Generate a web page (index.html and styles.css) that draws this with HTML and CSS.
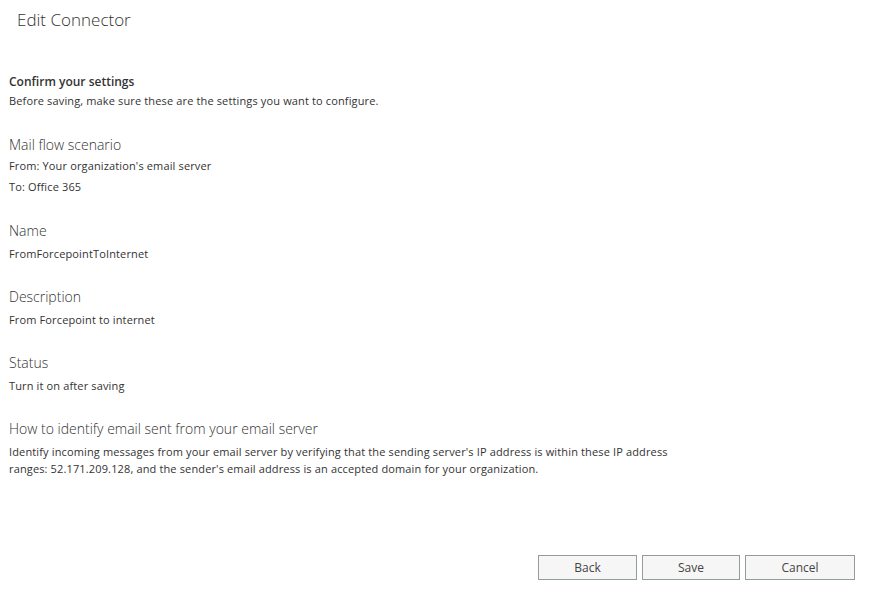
FILE: index.html
```html
<!DOCTYPE html>
<html lang="en">
<head>
  <meta charset="UTF-8" />
  <title>Edit Connector</title>
  <link rel="stylesheet" href="styles.css">
</head>
<body>
  <div class="page">
    <h1 class="title">Edit Connector</h1>

    <div class="content">
      <div class="intro">
        <div class="intro-head">Confirm your settings</div>
        <div class="intro-text">Before saving, make sure these are the settings you want to configure.</div>
      </div>

      <div class="section section-scenario">
        <h2 class="label">Mail flow scenario</h2>
        <div class="value">From: Your organization's email server</div>
        <div class="value">To: Office 365</div>
      </div>

      <div class="section">
        <h2 class="label">Name</h2>
        <div class="value">FromForcepointToInternet</div>
      </div>

      <div class="section">
        <h2 class="label">Description</h2>
        <div class="value">From Forcepoint to internet</div>
      </div>

      <div class="section">
        <h2 class="label">Status</h2>
        <div class="value">Turn it on after saving</div>
      </div>

      <div class="section">
        <h2 class="label">How to identify email sent from your email server</h2>
        <p class="para">Identify incoming messages from your email server by verifying that the sending server's IP address is within these IP address ranges: 52.171.209.128, and the sender's email address is an accepted domain for your organization.</p>
      </div>
    </div>

    <div class="footer">
      <button class="btn btn-back">Back</button>
      <button class="btn btn-save">Save</button>
      <button class="btn btn-cancel">Cancel</button>
    </div>
  </div>
</body>
</html>
```

FILE: styles.css
```css
body { margin: 0; font-family: 'Open Sans', 'Noto Sans', sans-serif; background: #fff; color: #333; }
.page { display: flex; flex-direction: column; min-height: 100vh; box-sizing: border-box; padding-bottom: 26px; }
.title { margin: 0; padding: 8px 0 0 17px; font-size: 17px; font-weight: 300; line-height: 24px; color: #333; }
.content { padding-left: 9px; }
.intro { margin-top: 40px; }
.intro-head { font-size: 12px; font-weight: 600; line-height: 20px; color: #333; }
.intro-text { font-size: 11px; line-height: 18px; letter-spacing: 0.14px; color: #333; }
.section { margin-top: 22px; }
.label { margin: 0; font-size: 14px; font-weight: 300; line-height: 22px; color: #333; }
.value { font-size: 11px; line-height: 21px; margin-top: 1px; letter-spacing: 0.14px; color: #333; }
.section-scenario { margin-top: 24px; padding-bottom: 1px; }
.section-scenario .value { margin-top: -1px; }
.section-scenario .value + .value { margin-top: 0; }
.para { margin: 3px 0 0; max-width: 680px; font-size: 11px; line-height: 17px; letter-spacing: 0.14px; color: #333; }
.footer { margin-top: auto; display: flex; justify-content: flex-end; gap: 5px; padding-right: 29px; }
.btn { height: 25px; padding: 0; border: 1px solid #939d9d; background: #f6f6f6; color: #444; font-family: inherit; font-size: 12px; }
.btn-back { width: 99px; }
.btn-save { width: 98px; }
.btn-cancel { width: 110px; }
```
